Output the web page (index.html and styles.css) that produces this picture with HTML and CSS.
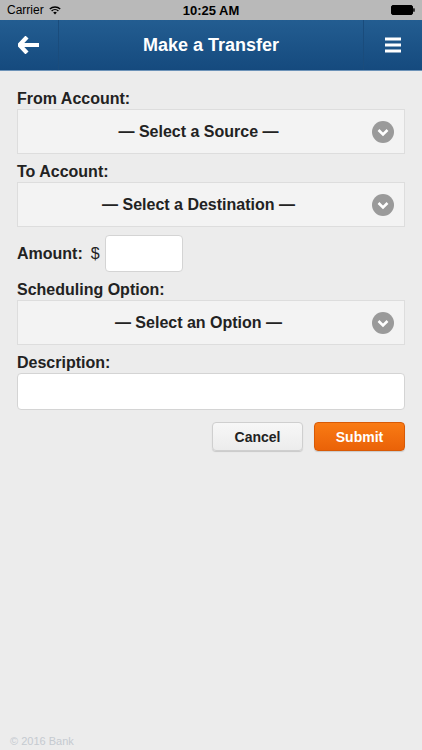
FILE: index.html
```html
<!DOCTYPE html>
<html>
<head>
<meta charset="utf-8">
<link rel="stylesheet" href="styles.css">
</head>
<body>
<div class="status">
  <div class="status-left">
    <span class="carrier">Carrier</span>
    <svg class="wifi" width="12" height="9" viewBox="0 0 12 9">
      <path d="M6 8.6 L4.2 6.6 A2.6 2.6 0 0 1 7.8 6.6 Z" fill="#000"/>
      <path d="M2.6 5 A4.9 4.9 0 0 1 9.4 5" stroke="#000" stroke-width="1.4" fill="none"/>
      <path d="M0.8 3.1 A7.4 7.4 0 0 1 11.2 3.1" stroke="#000" stroke-width="1.4" fill="none"/>
    </svg>
  </div>
  <div class="time">10:25 AM</div>
  <div class="status-right">
    <svg width="24" height="10" viewBox="0 0 24 10">
      <rect x="0.5" y="0.5" width="21" height="9" rx="1.5" fill="#000" stroke="#000"/>
      <rect x="22.2" y="3.2" width="1.5" height="3.6" rx="0.5" fill="#000"/>
    </svg>
  </div>
</div>
<header class="topbar">
  <div class="nav-btn left">
    <svg width="22" height="18" viewBox="0 0 22 18">
      <path d="M9 1 L1.5 9 L9 17 M2.5 9 H21" stroke="#fff" stroke-width="4.2" fill="none" stroke-linejoin="miter"/>
    </svg>
  </div>
  <h1 class="title">Make a Transfer</h1>
  <div class="nav-btn right">
    <svg width="16" height="16" viewBox="0 0 16 16">
      <rect x="0" y="0.5" width="16" height="3" fill="#fff"/>
      <rect x="0" y="6.5" width="16" height="3" fill="#fff"/>
      <rect x="0" y="12.5" width="16" height="3" fill="#fff"/>
    </svg>
  </div>
</header>
<main class="form">
  <label class="label">From Account:</label>
  <div class="select">
    <span class="select-text">— Select a Source —</span>
    <span class="chev"><svg width="22" height="22" viewBox="0 0 22 22"><circle cx="11" cy="11" r="11" fill="#9a9a9a"/><path d="M6.5 9 L11 13.5 L15.5 9" stroke="#fff" stroke-width="2.6" fill="none"/></svg></span>
  </div>
  <label class="label">To Account:</label>
  <div class="select">
    <span class="select-text">— Select a Destination —</span>
    <span class="chev"><svg width="22" height="22" viewBox="0 0 22 22"><circle cx="11" cy="11" r="11" fill="#9a9a9a"/><path d="M6.5 9 L11 13.5 L15.5 9" stroke="#fff" stroke-width="2.6" fill="none"/></svg></span>
  </div>
  <div class="amount-row">
    <label class="label inline">Amount:</label>
    <span class="dollar">$</span>
    <div class="input amount"></div>
  </div>
  <label class="label">Scheduling Option:</label>
  <div class="select">
    <span class="select-text">— Select an Option —</span>
    <span class="chev"><svg width="22" height="22" viewBox="0 0 22 22"><circle cx="11" cy="11" r="11" fill="#9a9a9a"/><path d="M6.5 9 L11 13.5 L15.5 9" stroke="#fff" stroke-width="2.6" fill="none"/></svg></span>
  </div>
  <label class="label">Description:</label>
  <div class="input desc"></div>
  <div class="buttons">
    <button class="btn cancel">Cancel</button>
    <button class="btn submit">Submit</button>
  </div>
</main>
<div class="footer">© 2016 Bank</div>
</body>
</html>
```

FILE: styles.css
```css
html, body {
  margin: 0;
  padding: 0;
}
body {
  width: 422px;
  height: 750px;
  overflow: hidden;
  background: #ececec;
  font-family: "Liberation Sans", Arial, sans-serif;
  color: #222;
  position: relative;
}
.status {
  height: 20px;
  background: #b9b9b9;
  display: flex;
  align-items: center;
  justify-content: space-between;
  padding: 0 7px;
  position: relative;
}
.status-left {
  display: flex;
  align-items: center;
  gap: 5px;
  font-size: 12px;
  color: #000;
}
.time {
  position: absolute;
  left: 0;
  right: 0;
  text-align: center;
  font-size: 13px;
  font-weight: bold;
  color: #000;
  pointer-events: none;
}
.status-right {
  display: flex;
  align-items: center;
}
.topbar {
  height: 50px;
  background: linear-gradient(#235d91, #154a7e);
  border-bottom: 1px solid #6d93b8;
  display: flex;
  align-items: center;
}
.nav-btn {
  width: 58px;
  height: 100%;
  display: flex;
  align-items: center;
  justify-content: center;
}
.nav-btn.left {
  border-right: 1px solid #1a4c7c;
}
.nav-btn.right {
  border-left: 1px solid #1a4c7c;
}
.title {
  flex: 1;
  margin: 0;
  text-align: center;
  color: #fff;
  font-size: 18px;
  font-weight: bold;
  padding-top: 1px;
}
.form {
  padding: 18px 17px 0 17px;
  display: flex;
  flex-direction: column;
}
.label {
  font-size: 16px;
  font-weight: bold;
  color: #222;
  line-height: 19px;
  margin-bottom: 1px;
}
.select {
  height: 43px;
  background: #f3f3f3;
  border: 1px solid #dddddd;
  display: flex;
  align-items: center;
  position: relative;
  margin-bottom: 8px;
  padding-right: 25px;
}
.select-text {
  flex: 1;
  text-align: center;
  font-size: 16px;
  font-weight: bold;
  color: #222;
  padding-top: 1px;
}
.chev {
  position: absolute;
  right: 10px;
  top: 11px;
  width: 22px;
  height: 22px;
}
.amount-row {
  display: flex;
  align-items: center;
  margin: 0 0 8px 0;
}
.label.inline {
  margin: 0 8px 0 0;
}
.dollar {
  font-size: 16px;
  color: #222;
  margin-right: 5px;
}
.input {
  background: #fff;
  border: 1px solid #d4d4d4;
  border-radius: 4px;
  box-sizing: border-box;
}
.input.amount {
  width: 78px;
  height: 37px;
}
.input.desc {
  height: 37px;
}
.buttons {
  display: flex;
  justify-content: flex-end;
  gap: 11px;
  margin-top: 12px;
}
.btn {
  width: 91px;
  height: 29px;
  border-radius: 4px;
  font-family: "Liberation Sans", Arial, sans-serif;
  font-size: 14px;
  font-weight: bold;
  padding: 0;
  box-sizing: border-box;
}
.btn.cancel {
  background: linear-gradient(#f7f7f7, #ececec);
  border: 1px solid #cfcfcf;
  color: #222;
  box-shadow: 0 1px 1px rgba(0,0,0,0.15);
}
.btn.submit {
  background: linear-gradient(#f97b14, #ea6208);
  border: 1px solid #d85a06;
  color: #fff;
  box-shadow: 0 1px 1px rgba(0,0,0,0.15);
}
.footer {
  position: absolute;
  left: 10px;
  top: 735px;
  font-size: 11px;
  color: #c5cad0;
}
```
